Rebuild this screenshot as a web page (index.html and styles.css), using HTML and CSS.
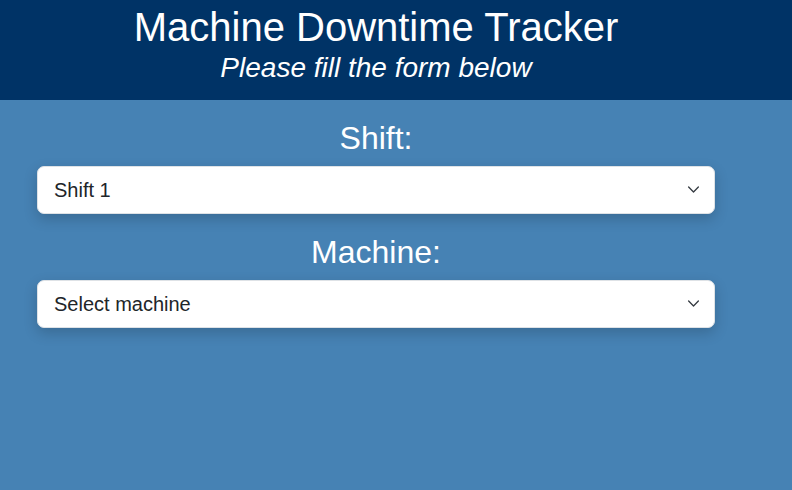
FILE: index.html
```html
<!DOCTYPE html>
<html>
<head>
<meta charset="utf-8">
<link rel="stylesheet" href="styles.css">
</head>
<body>
<div class="page">
  <header class="header">
    <h1 class="title">Machine Downtime Tracker</h1>
    <p class="subtitle">Please fill the form below</p>
  </header>
  <main class="form">
    <div class="field">
      <label class="label" for="shift">Shift:</label>
      <div class="select-wrap">
        <select id="shift" class="select">
          <option>Shift 1</option>
          <option>Shift 2</option>
          <option>Shift 3</option>
        </select>
        <svg class="chevron" viewBox="0 0 16 16" width="13" height="13"><path d="M2 5l6 6 6-6" fill="none" stroke="#343a40" stroke-width="1.6" stroke-linecap="round" stroke-linejoin="round"/></svg>
      </div>
    </div>
    <div class="field">
      <label class="label" for="machine">Machine:</label>
      <div class="select-wrap">
        <select id="machine" class="select">
          <option>Select machine</option>
        </select>
        <svg class="chevron" viewBox="0 0 16 16" width="13" height="13"><path d="M2 5l6 6 6-6" fill="none" stroke="#343a40" stroke-width="1.6" stroke-linecap="round" stroke-linejoin="round"/></svg>
      </div>
    </div>
  </main>
</div>
</body>
</html>
```
FILE: styles.css
```css
html, body {
  margin: 0;
  padding: 0;
  height: 100%;
}
body {
  background: #4682b4;
  font-family: "Liberation Sans", Arial, sans-serif;
  color: #fff;
}
.header {
  background: #003366;
  height: 100px;
  width: 100%;
  box-sizing: border-box;
  padding-top: 5px;
}
.title, .subtitle {
  width: 752px;
  text-align: center;
  margin: 0;
}
.title {
  font-size: 40px;
  font-weight: normal;
  line-height: 44px;
}
.subtitle {
  font-size: 28px;
  font-style: italic;
  line-height: 32px;
  margin-top: 3px;
}
.form {
  width: 752px;
  box-sizing: border-box;
  padding: 18px 37px 0;
  display: flex;
  flex-direction: column;
  gap: 18px;
}
.field {
  display: flex;
  flex-direction: column;
  align-items: stretch;
}
.label {
  font-size: 32px;
  text-align: center;
  line-height: 40px;
  margin-bottom: 8px;
}
.select-wrap {
  position: relative;
}
.select {
  -webkit-appearance: none;
  appearance: none;
  width: 100%;
  height: 48px;
  border: 1px solid #dee2e6;
  border-radius: 7px;
  background: #fff;
  color: #212529;
  font-family: "Liberation Sans", Arial, sans-serif;
  font-size: 20px;
  padding: 0 40px 0 16px;
  box-shadow: 0 5px 14px rgba(0, 0, 0, 0.18);
  outline: none;
}
.chevron {
  position: absolute;
  right: 15px;
  top: 17px;
  pointer-events: none;
}
```
